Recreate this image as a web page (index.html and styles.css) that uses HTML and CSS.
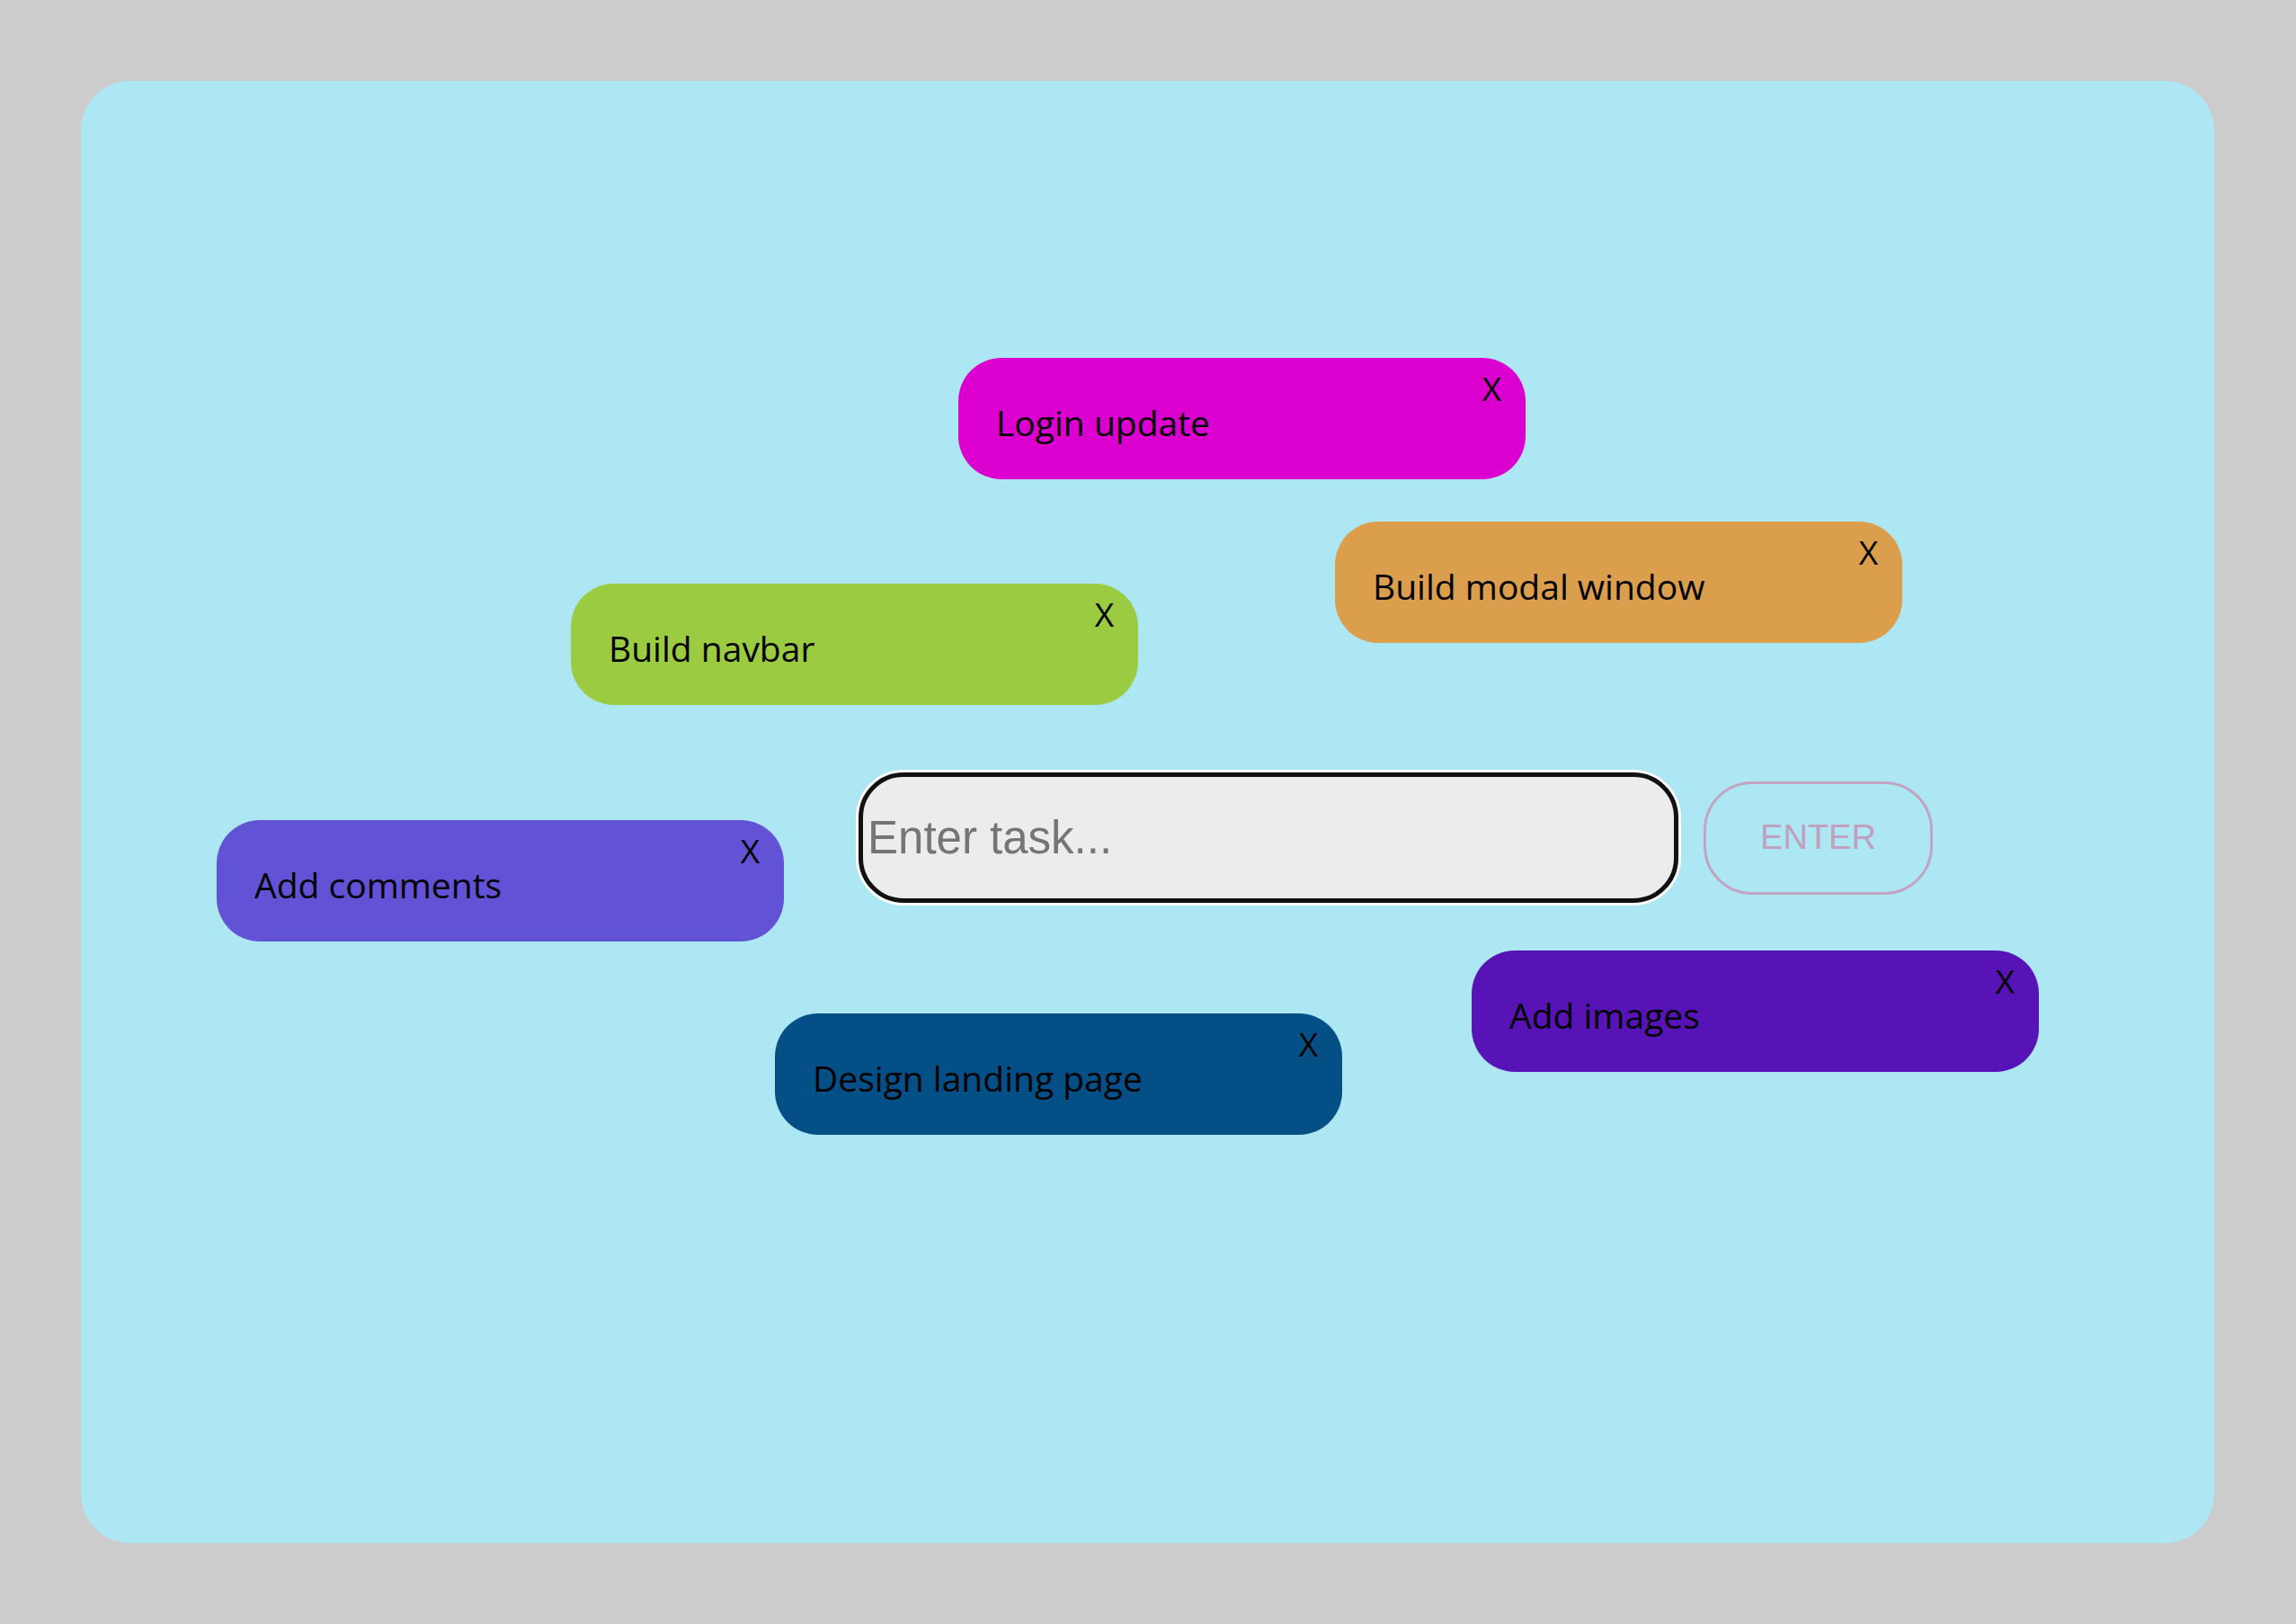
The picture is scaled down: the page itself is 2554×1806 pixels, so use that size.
FILE: index.html
```html
<!DOCTYPE html>
<html lang="en">
<head>
<meta charset="utf-8">
<title>Task board</title>
<link rel="stylesheet" href="styles.css">
</head>
<body>
<main class="board">
  <div class="note note-pink" style="left:976px;top:308px;"><span class="note-text">Login update</span><button class="note-close">X</button></div>
  <div class="note note-orange" style="left:1395px;top:490px;"><span class="note-text">Build modal window</span><button class="note-close">X</button></div>
  <div class="note note-green" style="left:545px;top:559px;"><span class="note-text">Build navbar</span><button class="note-close">X</button></div>
  <div class="note note-indigo" style="left:151px;top:822px;"><span class="note-text">Add comments</span><button class="note-close">X</button></div>
  <div class="note note-navy" style="left:772px;top:1037px;"><span class="note-text">Design landing page</span><button class="note-close">X</button></div>
  <div class="note note-violet" style="left:1547px;top:967px;"><span class="note-text">Add images</span><button class="note-close">X</button></div>

  <form class="task-form">
    <input class="task-input" type="text" placeholder="Enter task...">
    <button class="task-button" type="button">ENTER</button>
  </form>
</main>
</body>
</html>
```
FILE: styles.css
```css
* { box-sizing: border-box; }
html, body { margin: 0; height: 100%; }
body {
  background: #cccccc;
  padding: 90px 91px 90px 90px;
  font-family: "Open Sans", "Noto Sans", sans-serif;
}
.board {
  position: relative;
  height: 100%;
  background: #ade7f3;
  border-radius: 55px;
  display: flex;
  align-items: center;
  padding: 57px 0 0 865px;
}
.note {
  position: absolute;
  width: 631px;
  height: 135px;
  border-radius: 48px;
  display: flex;
  align-items: center;
  padding: 8px 0 0 42px;
}
.note-text {
  font-size: 39px;
  color: #000;
}
.note-close {
  position: absolute;
  top: 8px;
  right: 27px;
  border: 0;
  background: transparent;
  padding: 0;
  font-family: "Open Sans", "Noto Sans", sans-serif;
  font-size: 37px;
  color: #000;
}
.note-pink { background: #dc00d0; }
.note-orange { background: #db9e4c; }
.note-green { background: #9bcb41; }
.note-indigo { background: #6152d6; }
.note-navy { background: #044f86; }
.note-violet { background: #5813b7; }

.task-form {
  display: flex;
  align-items: center;
  gap: 28px;
}
.task-input {
  width: 912px;
  height: 145px;
  border: 5px solid #111;
  border-radius: 50px;
  background: #ececec;
  box-shadow: 0 0 0 3px #ffffff;
  padding: 0 0 0 5px;
  font-family: "Liberation Sans", Arial, sans-serif;
  font-size: 51px;
  color: #000;
  outline: none;
}
.task-input::placeholder { color: #757575; }
.task-button {
  width: 255px;
  height: 126px;
  border: 3px solid #c2a3c0;
  border-radius: 54px;
  background: transparent;
  font-family: "Liberation Sans", Arial, sans-serif;
  font-size: 38px;
  color: #c0a0bc;
  padding: 0;
}
```
